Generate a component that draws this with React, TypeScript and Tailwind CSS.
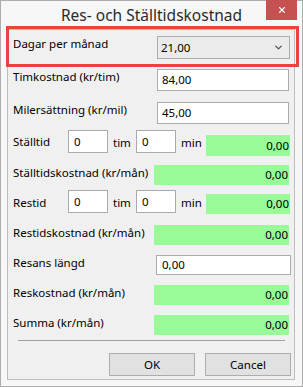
import { X, ChevronDown } from "lucide-react";

const Field = ({ value, className }: { value: string; className: string }) => (
  <div className={`flex items-center bg-white border border-[#ababab] pl-[4px] ${className}`}>
    {value}
  </div>
);

const Green = ({ className }: { className: string }) => (
  <div className={`flex items-center justify-end bg-[#98fb98] pr-[1px] ${className}`}>0,00</div>
);

export default function App() {
  return (
    <div className="relative w-[303px] h-[387px] bg-[#f7f7f7] border border-[#adadad] flex flex-col font-['Noto_Sans',sans-serif] text-[11.5px] leading-[16px] text-black whitespace-nowrap">
      {/* title bar */}
      <div className="flex h-[28px]">
        <div className="flex-1" />
        <div className="pt-[3px] text-[15.5px] leading-[22px] text-[#2b2b2b]">
          Res- och Ställtidskostnad
        </div>
        <div className="flex-1 flex justify-end">
          <div className="w-[31px] h-[20px] mr-[5px] -mt-[1px] bg-[#c75050] flex items-center justify-center">
            <X size={10} strokeWidth={2.6} color="#fff" />
          </div>
        </div>
      </div>

      {/* client area */}
      <div className="ml-[6px] w-[288px] flex-1 mb-[6px] border border-[#bdbdbd] bg-[#f0f0f0] pl-[5px] pt-[6px] flex flex-col">
        <div className="flex items-start h-[23px]">
          <span>Dagar per månad</span>
          <div className="ml-auto mr-[4px] w-[133px] h-[23px] border border-[#acacac] bg-[#ebebeb] flex items-center pl-[3px] pr-[5px]">
            <span className="flex-1">21,00</span>
            <ChevronDown size={11} strokeWidth={3} color="#555" />
          </div>
        </div>

        <div className="flex items-start h-[22px] mt-[10px]">
          <span>Timkostnad (kr/tim)</span>
          <Field value="84,00" className="ml-auto mr-[5px] w-[132px] h-[22px]" />
        </div>

        <div className="flex items-start h-[22px] mt-[11px]">
          <span>Milersättning (kr/mil)</span>
          <Field value="45,00" className="ml-auto mr-[5px] w-[132px] h-[22px]" />
        </div>

        <div className="flex items-start h-[26px] mt-[6px]">
          <span className="w-[55px] pt-[4px]">Ställtid</span>
          <Field value="0" className="w-[40px] h-[23px] pl-[5px]" />
          <span className="w-[28px] pt-[5px] pl-[5px]">tim</span>
          <Field value="0" className="w-[40px] h-[23px] pl-[5px]" />
          <span className="w-[29px] pt-[5px] pl-[5px]">min</span>
          <Green className="mt-[5px] w-[84px] h-[21px] mr-[4px] ml-auto" />
        </div>

        <div className="flex items-start h-[20px] mt-[9px]">
          <span>Ställtidskostnad (kr/mån)</span>
          <Green className="ml-auto mr-[5px] w-[135px] h-[20px]" />
        </div>

        <div className="flex items-start h-[24px] mt-[5px]">
          <span className="w-[55px] pt-[5px]">Restid</span>
          <Field value="0" className="w-[40px] h-[23px] pl-[5px]" />
          <span className="w-[28px] pt-[5px] pl-[5px]">tim</span>
          <Field value="0" className="w-[40px] h-[23px] pl-[5px]" />
          <span className="w-[29px] pt-[5px] pl-[5px]">min</span>
          <Green className="mt-[4px] w-[84px] h-[20px] mr-[4px] ml-auto" />
        </div>

        <div className="flex items-start h-[20px] mt-[11px]">
          <span>Restidskostnad (kr/mån)</span>
          <Green className="ml-auto mr-[5px] w-[135px] h-[20px]" />
        </div>

        <div className="flex items-start h-[20px] mt-[10px]">
          <span>Resans längd</span>
          <Field value="0,00" className="ml-auto mr-[3px] w-[135px] h-[20px] pl-[5px]" />
        </div>

        <div className="flex items-start h-[20px] mt-[10px]">
          <span>Reskostnad (kr/mån)</span>
          <Green className="ml-auto mr-[5px] w-[135px] h-[20px]" />
        </div>

        <div className="flex items-start h-[20px] mt-[10px]">
          <span>Summa (kr/mån)</span>
          <Green className="ml-auto mr-[5px] w-[135px] h-[20px]" />
        </div>

        <div className="h-[1px] bg-[#a0a0a0] mt-[5px] ml-[5px] mr-[9px]" />

        <div className="flex justify-end gap-[10px] mt-[12px] mr-[3px]">
          <div className="w-[86px] h-[23px] border border-[#adadad] bg-[#e1e1e1] flex items-center justify-center">OK</div>
          <div className="w-[86px] h-[23px] border border-[#adadad] bg-[#e1e1e1] flex items-center justify-center">Cancel</div>
        </div>
      </div>

      {/* red highlight annotation */}
      <div className="absolute left-[5px] top-[25px] w-[293px] h-[41px] border-[3px] border-[#e5443f]" />
    </div>
  );
}
